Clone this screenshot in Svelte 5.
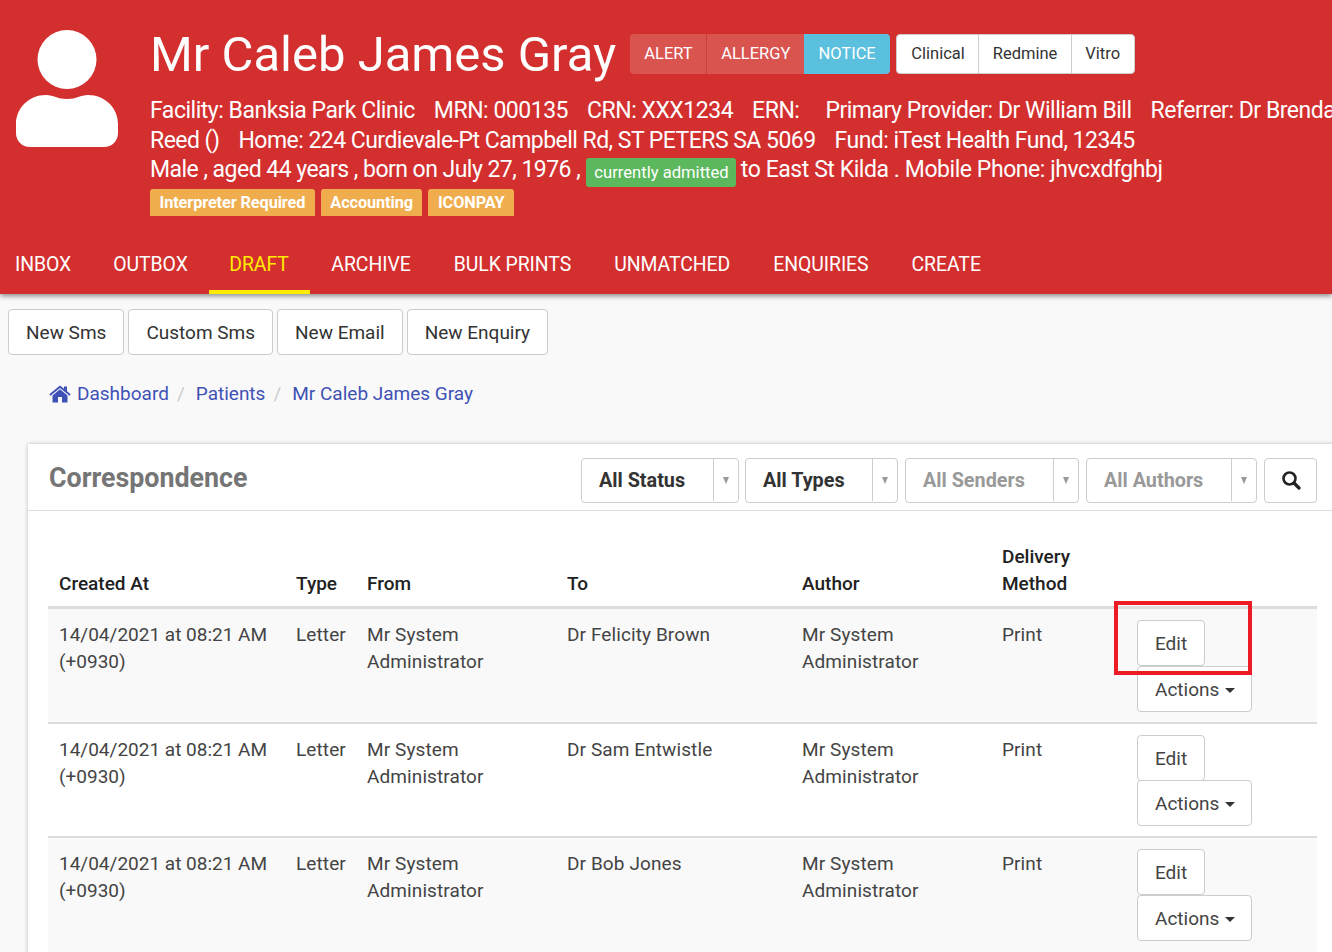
<script>
  const rows = [
    { to: 'Dr Felicity Brown', marked: true },
    { to: 'Dr Sam Entwistle', marked: false },
    { to: 'Dr Bob Jones', marked: false }
  ];
  const filters = [
    { label: 'All Status', w: 158, muted: false },
    { label: 'All Types', w: 153, muted: false },
    { label: 'All Senders', w: 174, muted: true },
    { label: 'All Authors', w: 171, muted: true }
  ];
  const tabs = ['INBOX', 'OUTBOX', 'DRAFT', 'ARCHIVE', 'BULK PRINTS', 'UNMATCHED', 'ENQUIRIES', 'CREATE'];
</script>

<div class="page">
  <header class="head">
    <div class="top">
      <svg class="avatar" viewBox="0 0 102 117" aria-hidden="true">
        <ellipse cx="51" cy="29.500" rx="29.500" ry="29.500" fill="#fff" />
        <path d="M0 98V94C0 78 13 65 30 65C38 65 41 69 51 69C61 69 64 65 72 65C89 65 102 78 102 94V103C102 111 96 117 88 117H14C6 117 0 111 0 103Z" fill="#fff" />
      </svg>
      <div class="info">
        <div class="title-row">
          <h1>Mr Caleb James Gray</h1>
          <div class="group alerts">
            <span class="a">ALERT</span><span class="a">ALLERGY</span><span class="a notice">NOTICE</span>
          </div>
          <div class="group links">
            <span>Clinical</span><span>Redmine</span><span>Vitro</span>
          </div>
        </div>
        <div class="line l1">Facility: Banksia Park Clinic<i class="g19"></i>MRN: 000135<i class="g19"></i>CRN: XXX1234<i class="g19"></i>ERN:<i class="g26"></i>Primary Provider: Dr William Bill<i class="g19"></i>Referrer: Dr Brenda</div>
        <div class="line tight">Reed ()<i class="g19"></i>Home: 224 Curdievale-Pt Campbell Rd, ST PETERS SA 5069<i class="g19"></i>Fund: iTest Health Fund, 12345</div>
        <div class="line tight">Male , aged 44 years , born on July 27, 1976 , <span class="admitted">currently admitted</span> <span class="after">to East St Kilda . Mobile Phone: jhvcxdfghbj</span></div>
        <div class="tags"><span>Interpreter Required</span><span>Accounting</span><span>ICONPAY</span></div>
      </div>
    </div>
    <nav class="tabs">
      {#each tabs as t}
        <span class="tab" class:active={t === 'DRAFT'}>{t}</span>
      {/each}
    </nav>
  </header>

  <div class="actions">
    <span class="btn">New Sms</span><span class="btn">Custom Sms</span><span class="btn">New Email</span><span class="btn">New Enquiry</span>
  </div>

  <div class="crumbs">
    <svg class="home" viewBox="0 0 22 18" aria-hidden="true">
      <path d="M11 0.500L0.300 9.300L1.500 10.800L11 3L20.500 10.800L21.700 9.300L18 6.200V1.500H15V3.800Z" fill="#3f51b5" />
      <path d="M11 4.300L3.500 10.500V17.500H9V12H13V17.500H18.500V10.500Z" fill="#3f51b5" />
    </svg>
    <span class="lnk">Dashboard</span><span class="sep">/</span><span class="lnk">Patients</span><span class="sep">/</span><span class="lnk">Mr Caleb James Gray</span>
  </div>

  <section class="card">
    <div class="card-head">
      <h2>Correspondence</h2>
      <div class="filters">
        {#each filters as f}
          <div class="select" class:muted={f.muted} style="width:{f.w}px">
            <span class="sel-label">{f.label}</span>
            <span class="sel-arrow"><b></b></span>
          </div>
        {/each}
        <div class="search">
          <svg viewBox="0 0 20 20" width="20" height="20" aria-hidden="true">
            <circle cx="8.500" cy="8.500" r="6" fill="none" stroke="#222" stroke-width="2.600" />
            <path d="M13 13L18 18" stroke="#222" stroke-width="3.200" stroke-linecap="round" />
          </svg>
        </div>
      </div>
    </div>
    <div class="table-wrap">
      <table>
        <thead>
          <tr>
            <th class="c1">Created At</th><th class="c2">Type</th><th class="c3">From</th><th class="c4">To</th><th class="c5">Author</th><th class="c6">Delivery Method</th><th class="c7"></th>
          </tr>
        </thead>
        <tbody>
          {#each rows as r}
            <tr>
              <td class="first">14/04/2021 at 08:21 AM (+0930)</td>
              <td>Letter</td>
              <td>Mr System Administrator</td>
              <td>{r.to}</td>
              <td>Mr System Administrator</td>
              <td>Print</td>
              <td class="act">
                <div class="edit-wrap">
                  <span class="btn edit">Edit</span>
                  {#if r.marked}<span class="marker"></span>{/if}
                </div>
                <span class="btn act-btn">Actions <b class="caret"></b></span>
              </td>
            </tr>
          {/each}
        </tbody>
      </table>
    </div>
  </section>
</div>

<style>
  :global(body) {
    margin: 0;
    background: #f9f9f9;
    overflow: hidden;
  }
  .page {
    width: 1332px;
    height: 952px;
    overflow: hidden;
    font-family: Roboto, "Liberation Sans", sans-serif;
    font-size: 19px;
    color: #333;
    line-height: 26px;
  }
  .head {
    height: 294px;
    box-sizing: border-box;
    background: #d32f2f;
    color: #fff;
    box-shadow: 0 2px 5px rgba(0, 0, 0, 0.45);
    position: relative;
  }
  .top {
    display: flex;
    height: 241px;
    box-sizing: border-box;
    padding: 30px 0 0 16px;
  }
  .avatar {
    width: 102px;
    height: 117px;
    flex: none;
    margin-right: 32px;
  }
  .info {
    width: 1300px;
    flex: none;
    margin-top: -30px;
  }
  .title-row {
    display: flex;
    align-items: center;
    height: 97px;
    padding-top: 10px;
    box-sizing: border-box;
  }
  h1 {
    margin: 2px 14px 0 0;
    font-size: 49px;
    font-weight: 400;
    line-height: 60px;
    white-space: nowrap;
  }
  .group {
    display: flex;
    height: 40px;
    box-sizing: border-box;
    border-radius: 4px;
    overflow: hidden;
    font-size: 16.500px;
    line-height: 40px;
  }
  .alerts .a {
    background: #d9534f;
    padding: 0 14px;
    border-left: 1px solid #c9403c;
  }
  .alerts .a:first-child {
    border-left: 0;
    padding-right: 13.500px;
  }
  .alerts .notice {
    background: #5bc0de;
    border-left: 0;
    padding-right: 14.500px;
  }
  .links {
    margin-left: 6px;
    background: #fff;
    color: #333;
    border: 1px solid #ccc;
    line-height: 38px;
  }
  .links span {
    padding: 0 13.500px;
    border-left: 1px solid #ccc;
  }
  .links span:first-child {
    border-left: 0;
    padding-left: 14px;
  }
  .line {
    font-size: 23px;
    line-height: 29.500px;
    height: 29.500px;
    white-space: nowrap;
    letter-spacing: -0.48px;
  }
  .line.tight {
    letter-spacing: -0.53px;
  }
  .line .after {
    letter-spacing: -0.44px;
  }
  .l1 {
    margin-top: -1px;
  }
  i {
    display: inline-block;
  }
  .g19 {
    width: 19px;
  }
  .g26 {
    width: 26px;
  }
  .admitted {
    display: inline-block;
    background: #5cb85c;
    font-size: 16.600px;
    line-height: 29px;
    height: 29px;
    padding: 0 7px 0 8px;
    margin-left: 1px;
    border-radius: 3px;
    letter-spacing: 0;
    vertical-align: -1px;
  }
  .tags {
    display: flex;
    gap: 6px;
    margin-top: 4px;
  }
  .tags span {
    background: #f0ad4e;
    font-size: 16.300px;
    font-weight: 700;
    line-height: 28px;
    height: 27px;
    padding: 0 9.500px;
    border-radius: 3px 3px 0 0;
    letter-spacing: -0.1px;
  }
  .tabs {
    display: flex;
    height: 53px;
  }
  .tab {
    padding: 0 21.500px;
    font-size: 19.400px;
    letter-spacing: -0.05px;
    line-height: 48px;
    box-sizing: border-box;
  }
  .tab:first-child {
    padding-left: 15px;
    padding-right: 20.500px;
  }
  .tab.active {
    color: #ffeb00;
    border-bottom: 4px solid #ffeb00;
    padding-left: 20px;
    padding-right: 21px;
  }
  .actions {
    display: flex;
    gap: 4px;
    padding: 15px 0 0 8px;
  }
  .btn {
    display: inline-block;
    box-sizing: border-box;
    height: 46px;
    line-height: 46px;
    padding: 0 17px;
    background: #fff;
    border: 1px solid #ccc;
    border-radius: 4px;
    font-size: 19px;
    white-space: nowrap;
  }
  .crumbs {
    display: flex;
    align-items: center;
    padding: 25px 0 0 49px;
    height: 28px;
    font-size: 19px;
    color: #3f51b5;
  }
  .home {
    width: 22px;
    height: 18px;
    margin-right: 6px;
  }
  .sep {
    color: #ccc;
    padding: 0 11px 0 8px;
  }
  .card {
    margin: 36px 0 0 28px;
    width: 1309px;
    background: #fff;
    box-shadow: 0 0 4px rgba(0, 0, 0, 0.25);
    height: 600px;
  }
  .card-head {
    display: flex;
    justify-content: space-between;
    align-items: flex-start;
    padding: 14px 20px 0 21px;
    height: 67px;
    box-sizing: border-box;
    border-bottom: 1px solid #ddd;
  }
  h2 {
    margin: 1px 0 0;
    font-size: 26.800px;
    font-weight: 700;
    color: #757575;
    line-height: 38px;
  }
  .filters {
    display: flex;
    gap: 7px;
  }
  .select {
    display: flex;
    box-sizing: border-box;
    height: 45px;
    border: 1px solid #ccc;
    border-radius: 4px;
    font-size: 19.800px;
    font-weight: 700;
    color: #333;
    line-height: 44px;
    padding-left: 17px;
  }
  .select:first-child {
    margin-right: -1px;
  }
  .select.muted {
    color: #999;
  }
  .sel-label {
    flex: 1;
  }
  .sel-arrow {
    width: 24px;
    border-left: 1px solid #ccc;
    display: flex;
    align-items: center;
    justify-content: center;
    margin-bottom: 1px;
  }
  .sel-arrow b {
    border-left: 3.500px solid transparent;
    border-right: 3.500px solid transparent;
    border-top: 7px solid #999;
  }
  .search {
    box-sizing: border-box;
    width: 53px;
    height: 45px;
    border: 1px solid #ccc;
    border-radius: 4px;
    display: flex;
    align-items: center;
    justify-content: center;
  }
  .search svg {
    margin-bottom: 2px;
  }
  .table-wrap {
    padding: 24px 20px 0;
  }
  table {
    border-collapse: collapse;
    table-layout: fixed;
    width: 1269px;
  }
  th {
    text-align: left;
    vertical-align: bottom;
    font-size: 19px;
    font-weight: 500;
    color: #212121;
    padding: 8px 12px 9px;
    line-height: 27px;
    border-bottom: 3px solid #ddd;
  }
  th.c1,
  td.first {
    padding-left: 11px;
    padding-right: 0;
  }
  td {
    vertical-align: top;
    padding: 12px 12px 10px;
    line-height: 27px;
    font-size: 19px;
    letter-spacing: 0.1px;
    border-bottom: 2px solid #ddd;
    color: #444;
  }
  td.first {
    letter-spacing: 0;
  }
  td.act {
    padding-top: 11px;
    padding-bottom: 10px;
    letter-spacing: 0;
  }
  tbody tr:last-child td.act {
    padding-bottom: 12px;
  }
  tbody tr:nth-child(odd) {
    background: #f9f9f9;
  }
  .c1 { width: 225px; }
  .c2 { width: 47px; }
  .c3 { width: 176px; }
  .c4 { width: 211px; }
  .c5 { width: 176px; }
  .c6 { width: 111px; }
  .c7 { width: auto; }
  .edit-wrap {
    position: relative;
    height: 45.500px;
    width: 115px;
  }
  .edit {
    position: relative;
  }
  .act-btn {
    display: block;
    width: 115px;
  }
  .caret {
    display: inline-block;
    vertical-align: middle;
    border-left: 5px solid transparent;
    border-right: 5px solid transparent;
    border-top: 5px solid #333;
    margin-left: 1px;
  }
  .marker {
    position: absolute;
    left: -23px;
    top: -19px;
    width: 138px;
    height: 74px;
    box-sizing: border-box;
    border: 4px solid #ed1c24;
    z-index: 2;
  }
</style>
